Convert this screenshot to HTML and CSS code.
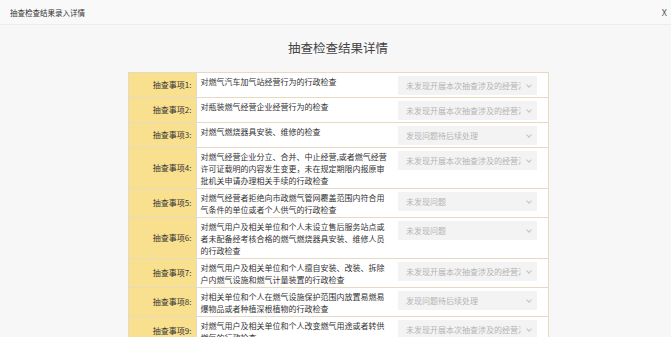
FILE: index.html
```html
<html><head>
	<title>抽查检查结果录入详情</title>
	<link rel="stylesheet" href="styles.css">
</head>
<body>
	<div id="dialog">
		<div id="dialogHeader">
			<span class="dialogTitle">抽查检查结果录入详情</span>
			<span class="dialogClose">X</span>
		</div>
		<div id="dialogBody">
			<h1>抽查检查结果详情</h1>
			<table id="resultTable">
				<colgroup>
					<col class="labelCol">
					<col class="itemCol">
					<col class="resultCol">
				</colgroup>
				<tr>
					<td class="label">抽查事项1:</td>
					<td class="item">对燃气汽车加气站经营行为的行政检查</td>
					<td class="result"><div class="select"><span>未发现开展本次抽查涉及的经营活动</span></div></td>
				</tr>
				<tr>
					<td class="label">抽查事项2:</td>
					<td class="item">对瓶装燃气经营企业经营行为的检查</td>
					<td class="result"><div class="select"><span>未发现开展本次抽查涉及的经营活动</span></div></td>
				</tr>
				<tr>
					<td class="label">抽查事项3:</td>
					<td class="item">对燃气燃烧器具安装、维修的检查</td>
					<td class="result"><div class="select"><span>发现问题待后续处理</span></div></td>
				</tr>
				<tr>
					<td class="label">抽查事项4:</td>
					<td class="item">对燃气经营企业分立、合并、中止经营,或者燃气经营许可证载明的内容发生变更，未在规定期限内报原审<br>批机关申请办理相关手续的行政检查</td>
					<td class="result"><div class="select"><span>未发现开展本次抽查涉及的经营活动</span></div></td>
				</tr>
				<tr>
					<td class="label">抽查事项5:</td>
					<td class="item">对燃气经营者拒绝向市政燃气管网覆盖范围内符合用气条件的单位或者个人供气的行政检查</td>
					<td class="result"><div class="select"><span>未发现问题</span></div></td>
				</tr>
				<tr>
					<td class="label">抽查事项6:</td>
					<td class="item">对燃气用户及相关单位和个人未设立售后服务站点或者未配备经考核合格的燃气燃烧器具安装、维修人员的行政检查</td>
					<td class="result"><div class="select"><span>未发现问题</span></div></td>
				</tr>
				<tr>
					<td class="label">抽查事项7:</td>
					<td class="item">对燃气用户及相关单位和个人擅自安装、改装、拆除户内燃气设施和燃气计量装置的行政检查</td>
					<td class="result"><div class="select"><span>未发现开展本次抽查涉及的经营活动</span></div></td>
				</tr>
				<tr>
					<td class="label">抽查事项8:</td>
					<td class="item">对相关单位和个人在燃气设施保护范围内放置易燃易爆物品或者种植深根植物的行政检查</td>
					<td class="result"><div class="select"><span>发现问题待后续处理</span></div></td>
				</tr>
				<tr>
					<td class="label">抽查事项9:</td>
					<td class="item">对燃气用户及相关单位和个人改变燃气用途或者转供燃气的行政检查</td>
					<td class="result"><div class="select"><span>未发现开展本次抽查涉及的经营活动</span></div></td>
				</tr>
			</table>
		</div>
	</div>
</body></html>
```

FILE: styles.css
```css
html, body {
	margin: 0;
	background: #ffffff;
	font-family: "Noto Sans CJK SC", "Liberation Sans", sans-serif;
}
#dialog {
	height: 337px;
	overflow: hidden;
	background: #f7f7f7;
}
#dialogHeader {
	height: 24px;
	border-bottom: 1px solid #ececec;
	background: #f9f9f9;
	display: flex;
	align-items: center;
	justify-content: space-between;
	padding: 0 4px 0 10px;
	color: #333;
}
#dialogHeader .dialogTitle {
	font-size: 7.5px;
}
#dialogHeader .dialogClose {
	font-size: 9px;
	color: #555;
}
#dialogBody {
	padding-left: 5px;
}
#dialogBody h1 {
	font-size: 12.5px;
	font-weight: normal;
	color: #444;
	text-align: center;
	line-height: 16px;
	margin: 0;
	padding: 15px 0 16px 0;
}
#resultTable {
	width: 420px;
	table-layout: fixed;
	margin: 0 auto;
	border-collapse: collapse;
	font-size: 8px;
	line-height: 12px;
	color: #333;
}
#resultTable col.labelCol { width: 68px; }
#resultTable col.itemCol { width: 198px; }
#resultTable col.resultCol { width: 154px; }
#resultTable td {
	border: 1px solid #e6dbc0;
	padding: 0;
}
#resultTable td.label {
	background: #f9e08e;
	text-align: right;
	vertical-align: middle;
	padding-right: 4px;
	white-space: nowrap;
}
#resultTable td.item {
	background: #fff;
	vertical-align: top;
	padding: 3px 3px 1px 4px;
	border-right: none;
}
#resultTable td.result {
	background: #fff;
	vertical-align: top;
	border-left: none;
	padding: 3px 0 2px 4px;
}
.select {
	position: relative;
	width: 139px;
	height: 19px;
	line-height: 19px;
	background: #f3f3f3;
	color: #b4b4b4;
}
.select span {
	display: block;
	margin: 0 16px 0 8px;
	white-space: nowrap;
	overflow: hidden;
}
.select:after {
	content: "";
	position: absolute;
	right: 6px;
	top: 7px;
	width: 3px;
	height: 3px;
	border-right: 1px solid #c2c2c2;
	border-bottom: 1px solid #c2c2c2;
	transform: rotate(45deg);
}
```
